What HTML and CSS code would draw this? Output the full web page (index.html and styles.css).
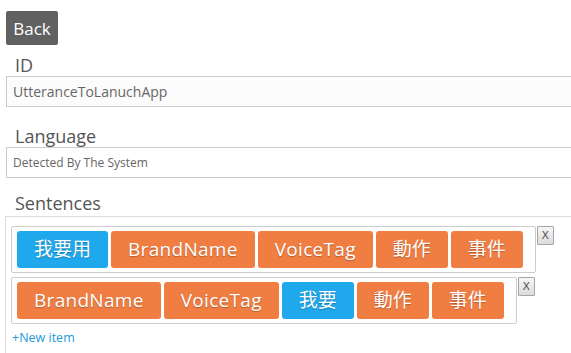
FILE: index.html
```html
<!DOCTYPE html>
<html lang="zh-Hant">
<head>
  <meta charset="UTF-8" />
  <meta name="viewport" content="width=device-width, initial-scale=1.0" />
  <title>Utterance</title>
  <link rel="stylesheet" href="styles.css">
</head>
<body>
  <div class="page">
    <button class="back">Back</button>

    <div class="field first">
      <div class="label">ID</div>
      <input class="box-input" type="text" value="UtteranceToLanuchApp" />
    </div>

    <div class="field lang">
      <div class="label">Language</div>
      <input class="box-input small" type="text" value="Detected By The System" />
    </div>

    <div class="field">
      <div class="label">Sentences</div>
      <div class="sentences">
        <div class="row">
          <div class="tags">
            <span class="tag blue">我要用</span>
            <span class="tag latin">BrandName</span>
            <span class="tag latin">VoiceTag</span>
            <span class="tag">動作</span>
            <span class="tag">事件</span>
          </div>
          <button class="remove">X</button>
        </div>
        <div class="row">
          <div class="tags">
            <span class="tag latin">BrandName</span>
            <span class="tag latin">VoiceTag</span>
            <span class="tag blue">我要</span>
            <span class="tag">動作</span>
            <span class="tag">事件</span>
          </div>
          <button class="remove">X</button>
        </div>
        <a class="new-item" href="#">+New item</a>
      </div>
    </div>
  </div>
</body>
</html>
```

FILE: styles.css
```css
html, body {
  overflow: hidden;
}
body {
  margin: 0;
  padding: 0;
  font-family: "Open Sans", "Noto Sans CJK TC", sans-serif;
  background: white;
  color: #555;
}
.page {
  width: 660px;
  padding: 11px 0 0 6px;
}
.back {
  display: block;
  width: 52px;
  height: 34px;
  padding: 0;
  border: none;
  border-radius: 2px;
  background-color: #616161;
  color: white;
  font-family: "Open Sans", sans-serif;
  font-size: 17px;
}
.field {
  margin-top: 14px;
}
.field.first {
  margin-top: 9px;
}
.field.lang {
  margin-top: 18px;
}
.label {
  padding-left: 9px;
  font-size: 18px;
  line-height: 22px;
  height: 22px;
  color: #555;
}
.box-input {
  display: block;
  box-sizing: border-box;
  width: 100%;
  height: 31px;
  margin: 0;
  padding: 0 6px;
  border: 1px solid #ccc;
  background: #fcfcfc;
  font-family: "Open Sans", sans-serif;
  font-size: 14px;
  color: #666;
}
.box-input.small {
  font-size: 12px;
  background: white;
}
.sentences {
  margin: 2px 0 0 -1px;
  padding: 9px 5px 7px 5px;
  border: 1px solid #ddd;
  display: flex;
  flex-direction: column;
  align-items: flex-start;
  gap: 4px;
}
.row {
  display: flex;
  align-items: flex-start;
  gap: 1px;
}
.tags {
  display: flex;
  gap: 3px;
  padding: 4px 12px 4px 5px;
  border: 1px solid #ccc;
  border-radius: 2px;
}
.tag {
  height: 37px;
  padding: 0 17px;
  border-radius: 3px;
  background-color: #f07d41;
  color: white;
  font-size: 19px;
  line-height: 37px;
  text-shadow: 0 1px 1px rgba(0, 0, 0, 0.25);
}
.tag.latin {
  letter-spacing: 0.3px;
}
.tag.blue {
  background-color: #1fa9ec;
}
.remove {
  width: 17px;
  height: 19px;
  padding: 0;
  border: 1px solid #a5a5a5;
  border-radius: 1px;
  background: linear-gradient(#f6f6f6, #dcdcdc);
  color: #555;
  font-family: "DejaVu Sans", sans-serif;
  font-size: 11px;
  line-height: 17px;
}
.new-item {
  margin: 1px 0 0 1px;
  color: #1e9ad6;
  font-size: 12.5px;
  text-decoration: none;
}
```
